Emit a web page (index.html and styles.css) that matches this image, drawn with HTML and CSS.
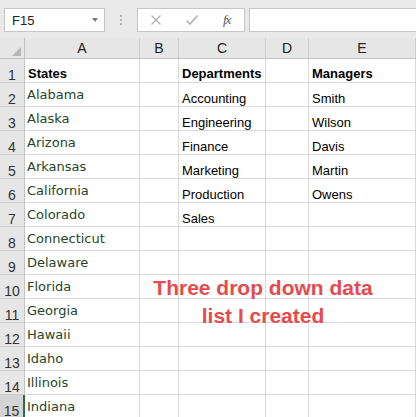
FILE: index.html
```html
<!DOCTYPE html>
<html>
<head>
<meta charset="utf-8">
<link rel="stylesheet" href="styles.css">
</head>
<body>
<div class="app">
  <div class="toolbar">
    <div class="namebox"><span class="nb-text">F15</span><span class="nb-arrow"></span></div>
    <div class="grip"><span></span><span></span><span></span></div>
    <div class="fxbox">
      <svg class="ico" width="12" height="12" viewBox="0 0 12 12"><path d="M1.5 1.5 L10.5 10.5 M10.5 1.5 L1.5 10.5" stroke="#b3b3b3" stroke-width="1.4" fill="none"/></svg>
      <svg class="ico" width="14" height="12" viewBox="0 0 14 12"><path d="M1.5 6.5 L5 10 L12.5 1.5" stroke="#b3b3b3" stroke-width="1.6" fill="none"/></svg>
      <span class="fx">fx</span>
    </div>
    <div class="formula"></div>
  </div>
  <div class="sheet">
    <div class="grid">
      <div class="corner"><span class="tri"></span></div>
      <div class="ch">A</div><div class="ch">B</div><div class="ch">C</div><div class="ch">D</div><div class="ch last">E</div>

      <div class="rh">1</div><div class="c b">States</div><div class="c"></div><div class="c b">Departments</div><div class="c"></div><div class="c b">Managers</div>
      <div class="rh">2</div><div class="c s">Alabama</div><div class="c"></div><div class="c">Accounting</div><div class="c"></div><div class="c">Smith</div>
      <div class="rh">3</div><div class="c s">Alaska</div><div class="c"></div><div class="c">Engineering</div><div class="c"></div><div class="c">Wilson</div>
      <div class="rh">4</div><div class="c s">Arizona</div><div class="c"></div><div class="c">Finance</div><div class="c"></div><div class="c">Davis</div>
      <div class="rh">5</div><div class="c s">Arkansas</div><div class="c"></div><div class="c">Marketing</div><div class="c"></div><div class="c">Martin</div>
      <div class="rh">6</div><div class="c s">California</div><div class="c"></div><div class="c">Production</div><div class="c"></div><div class="c">Owens</div>
      <div class="rh">7</div><div class="c s">Colorado</div><div class="c"></div><div class="c">Sales</div><div class="c"></div><div class="c"></div>
      <div class="rh">8</div><div class="c s">Connecticut</div><div class="c"></div><div class="c"></div><div class="c"></div><div class="c"></div>
      <div class="rh">9</div><div class="c s">Delaware</div><div class="c"></div><div class="c"></div><div class="c"></div><div class="c"></div>
      <div class="rh">10</div><div class="c s">Florida</div><div class="c"></div><div class="c"></div><div class="c"></div><div class="c"></div>
      <div class="rh">11</div><div class="c s">Georgia</div><div class="c"></div><div class="c"></div><div class="c"></div><div class="c"></div>
      <div class="rh">12</div><div class="c s">Hawaii</div><div class="c"></div><div class="c"></div><div class="c"></div><div class="c"></div>
      <div class="rh">13</div><div class="c s">Idaho</div><div class="c"></div><div class="c"></div><div class="c"></div><div class="c"></div>
      <div class="rh">14</div><div class="c s">Illinois</div><div class="c"></div><div class="c"></div><div class="c"></div><div class="c"></div>
      <div class="rh sel">15</div><div class="c s">Indiana</div><div class="c"></div><div class="c"></div><div class="c"></div><div class="c"></div>
    </div>
    <div class="note">Three drop down data<br>list I created</div>
  </div>
</div>
</body>
</html>
```

FILE: styles.css
```css
html, body {
  margin: 0;
  padding: 0;
}
body {
  width: 416px;
  height: 417px;
  overflow: hidden;
  background: #e9e9e9;
  font-family: "Liberation Sans", Arial, sans-serif;
}
.app {
  width: 416px;
}
.toolbar {
  height: 38px;
  box-sizing: border-box;
  padding: 8px 0 0 4px;
  display: flex;
  align-items: flex-start;
  background: #e9e9e9;
}
.namebox {
  width: 101px;
  height: 24px;
  box-sizing: border-box;
  background: #fff;
  border: 1px solid #c6c6c6;
  display: flex;
  align-items: center;
  justify-content: space-between;
  padding: 0 6px 0 7px;
}
.nb-text {
  font-size: 13px;
  color: #222;
}
.nb-arrow {
  width: 0;
  height: 0;
  border-left: 3.5px solid transparent;
  border-right: 3.5px solid transparent;
  border-top: 4px solid #7a7a7a;
}
.grip {
  width: 32px;
  height: 24px;
  display: flex;
  flex-direction: column;
  align-items: center;
  justify-content: center;
  gap: 2px;
}
.grip span {
  width: 2px;
  height: 2px;
  background: #b5b5b5;
}
.fxbox {
  width: 108px;
  height: 24px;
  box-sizing: border-box;
  background: #fff;
  border: 1px solid #c6c6c6;
  display: flex;
  align-items: center;
  padding-left: 12px;
}
.ico {
  display: block;
}
.fxbox .ico:first-child {
  margin-right: 23px;
}
.fxbox .ico:nth-child(2) {
  margin-right: 24px;
}
.fx {
  font-family: "Liberation Serif", "Times New Roman", serif;
  font-style: italic;
  font-size: 13px;
  color: #555;
  letter-spacing: -1px;
}
.formula {
  flex: 1;
  margin-left: 4px;
  margin-right: -4px;
  height: 24px;
  box-sizing: border-box;
  background: #fff;
  border: 1px solid #c6c6c6;
}
.sheet {
  position: relative;
}
.grid {
  display: grid;
  grid-template-columns: 25px 115px 39px 87px 43px 1fr;
  grid-template-rows: 21px;
  grid-auto-rows: 24px;
  background: #fff;
}
.corner, .ch, .rh {
  background: #e6e6e6;
  box-sizing: border-box;
}
.corner {
  border-right: 1px solid #c2c2c2;
  border-bottom: 1px solid #c2c2c2;
  position: relative;
}
.tri {
  position: absolute;
  right: 3px;
  bottom: 2px;
  width: 0;
  height: 0;
  border-left: 9px solid transparent;
  border-bottom: 9px solid #b6b6b6;
}
.ch {
  border-right: 1px solid #cdcdcd;
  border-bottom: 1px solid #c2c2c2;
  text-align: center;
  font-size: 14px;
  line-height: 18px;
  padding-top: 1px;
  color: #222;
}
.rh {
  border-right: 1px solid #c2c2c2;
  border-bottom: 1px solid #cdcdcd;
  text-align: center;
  font-size: 14px;
  line-height: 18px;
  padding-top: 7px;
  color: #333;
}
.rh.sel {
  background: #d4d4d4;
  border-right: 2px solid #217346;
}
.c {
  box-sizing: border-box;
  border-right: 1px solid #d9d9d9;
  border-bottom: 1px solid #d9d9d9;
  font-size: 13px;
  line-height: 18px;
  padding: 7px 0 0 3px;
  color: #000;
  white-space: nowrap;
}
.c.b {
  font-weight: bold;
  padding-top: 6px;
}
.c.s {
  font-family: "DejaVu Sans", Verdana, sans-serif;
  color: #27452a;
  padding: 3px 0 0 2px;
}
.note {
  position: absolute;
  left: 140px;
  top: 236px;
  width: 246px;
  text-align: center;
  font-weight: bold;
  font-size: 21px;
  line-height: 28px;
  color: #e64a4c;
}
```
